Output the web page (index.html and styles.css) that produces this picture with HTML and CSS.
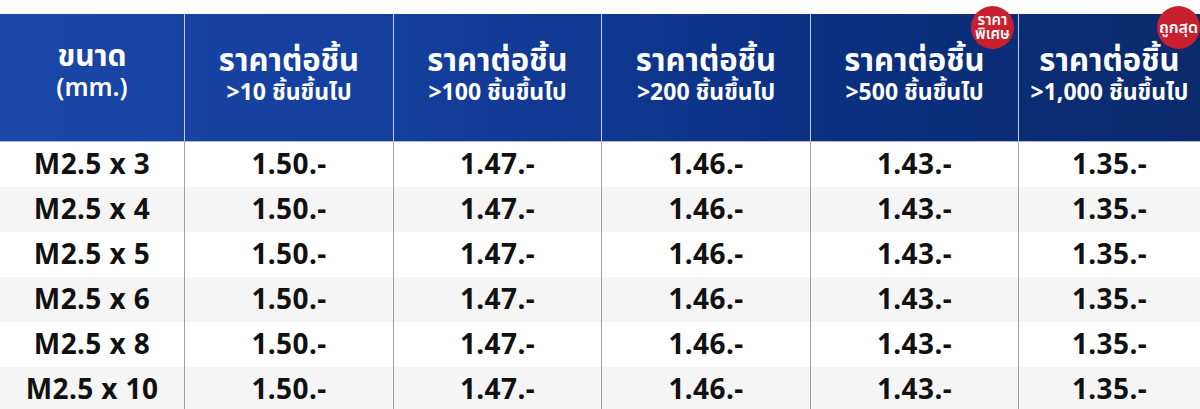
FILE: index.html
```html
<!DOCTYPE html>
<html lang="th">
<head>
<meta charset="utf-8">
<title>ราคา</title>
<link rel="stylesheet" href="styles.css">
</head>
<body>
<div class="sheet">
  <div class="head">
    <div class="hcell size"><span class="l1">ขนาด</span><span class="l2">(mm.)</span></div>
    <div class="hcell"><span class="t1">ราคาต่อชิ้น</span><span class="t2">&gt;10 ชิ้นขึ้นไป</span></div>
    <div class="hcell"><span class="t1">ราคาต่อชิ้น</span><span class="t2">&gt;100 ชิ้นขึ้นไป</span></div>
    <div class="hcell"><span class="t1">ราคาต่อชิ้น</span><span class="t2">&gt;200 ชิ้นขึ้นไป</span></div>
    <div class="hcell"><span class="t1">ราคาต่อชิ้น</span><span class="t2">&gt;500 ชิ้นขึ้นไป</span><span class="badge b-special">ราคา<br>พิเศษ</span></div>
    <div class="hcell"><span class="t1">ราคาต่อชิ้น</span><span class="t2">&gt;1,000 ชิ้นขึ้นไป</span><span class="badge b-cheap">ถูกสุด</span></div>
  </div>
  <div class="row"><div>M2.5 x 3</div><div>1.50.-</div><div>1.47.-</div><div>1.46.-</div><div>1.43.-</div><div>1.35.-</div></div>
  <div class="row alt"><div>M2.5 x 4</div><div>1.50.-</div><div>1.47.-</div><div>1.46.-</div><div>1.43.-</div><div>1.35.-</div></div>
  <div class="row"><div>M2.5 x 5</div><div>1.50.-</div><div>1.47.-</div><div>1.46.-</div><div>1.43.-</div><div>1.35.-</div></div>
  <div class="row alt"><div>M2.5 x 6</div><div>1.50.-</div><div>1.47.-</div><div>1.46.-</div><div>1.43.-</div><div>1.35.-</div></div>
  <div class="row"><div>M2.5 x 8</div><div>1.50.-</div><div>1.47.-</div><div>1.46.-</div><div>1.43.-</div><div>1.35.-</div></div>
  <div class="row alt"><div>M2.5 x 10</div><div>1.50.-</div><div>1.47.-</div><div>1.46.-</div><div>1.43.-</div><div>1.35.-</div></div>
</div>
</body>
</html>
```
FILE: styles.css
```css
html, body {
  margin: 0;
  padding: 0;
  background: #ffffff;
}
body {
  font-family: "Noto Sans Thai", "Noto Sans Thai UI", "Noto Sans", "DejaVu Sans", sans-serif;
  overflow: hidden;
  height: 409px;
}
.sheet {
  padding-top: 14px;
}
.head, .row {
  display: grid;
  grid-template-columns: 184px 209px 208px 209px 208px 182px;
}
.head {
  height: 128px;
  box-sizing: border-box;
  background: linear-gradient(90deg, #1a47a9 0%, #143e9c 35%, #0c3184 65%, #0a2a6c 100%);
  border-bottom: 1px solid #aab6dc;
}
.hcell {
  position: relative;
  display: flex;
  flex-direction: column;
  align-items: center;
  justify-content: center;
  color: #ffffff;
  font-weight: 700;
  border-left: 1px solid #c5cde6;
  padding-bottom: 4px;
}
.hcell:first-child {
  border-left: none;
  padding-bottom: 12px;
}
.size .l1 {
  font-size: 30px;
  line-height: 32px;
}
.size .l2 {
  font-size: 25px;
  line-height: 30px;
  font-weight: 600;
}
.t1 {
  font-size: 31px;
  line-height: 34px;
  white-space: nowrap;
}
.t2 {
  font-size: 23px;
  line-height: 28px;
  white-space: nowrap;
  font-weight: 700;
}
.badge {
  position: absolute;
  width: 43px;
  height: 43px;
  border-radius: 50%;
  background: #c8202e;
  color: #ffffff;
  display: flex;
  align-items: center;
  justify-content: center;
  text-align: center;
  font-size: 15px;
  line-height: 14px;
  font-weight: 600;
  top: -8px;
}
.b-special {
  right: 4px;
}
.b-cheap {
  right: 0;
  font-size: 16px;
}
.row {
  height: 45px;
  background: #ffffff;
}
.row.alt {
  background: #f5f5f5;
}
.row > div {
  display: flex;
  align-items: center;
  justify-content: center;
  font-family: "Noto Sans", "DejaVu Sans", sans-serif;
  font-weight: 700;
  font-size: 28px;
  letter-spacing: 0.4px;
  color: #111111;
  border-left: 1px solid #a0a0a0;
  padding-bottom: 4px;
  box-sizing: border-box;
}
.row > div:first-child {
  border-left: none;
}
```
